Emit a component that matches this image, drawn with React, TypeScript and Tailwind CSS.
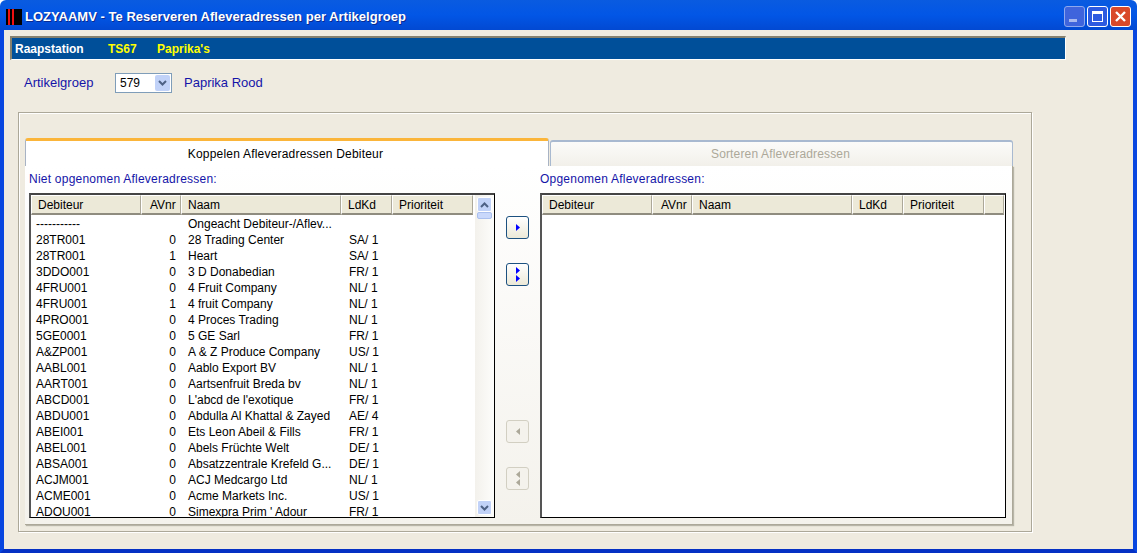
import { useState } from 'react';

const rows = [
  ['-----------', '', 'Ongeacht Debiteur-/Aflev...', ''],
  ['28TR001', '0', '28 Trading Center', 'SA/ 1'],
  ['28TR001', '1', 'Heart', 'SA/ 1'],
  ['3DDO001', '0', '3 D Donabedian', 'FR/ 1'],
  ['4FRU001', '0', '4 Fruit Company', 'NL/ 1'],
  ['4FRU001', '1', '4 fruit Company', 'NL/ 1'],
  ['4PRO001', '0', '4 Proces Trading', 'NL/ 1'],
  ['5GE0001', '0', '5 GE Sarl', 'FR/ 1'],
  ['A&ZP001', '0', 'A & Z Produce Company', 'US/ 1'],
  ['AABL001', '0', 'Aablo Export BV', 'NL/ 1'],
  ['AART001', '0', 'Aartsenfruit Breda bv', 'NL/ 1'],
  ['ABCD001', '0', "L'abcd de l'exotique", 'FR/ 1'],
  ['ABDU001', '0', 'Abdulla Al Khattal & Zayed', 'AE/ 4'],
  ['ABEI001', '0', 'Ets Leon Abeil & Fills', 'FR/ 1'],
  ['ABEL001', '0', 'Abels Früchte Welt', 'DE/ 1'],
  ['ABSA001', '0', 'Absatzzentrale Krefeld G...', 'DE/ 1'],
  ['ACJM001', '0', 'ACJ Medcargo Ltd', 'NL/ 1'],
  ['ACME001', '0', 'Acme Markets Inc.', 'US/ 1'],
  ['ADOU001', '0', "Simexpra Prim ' Adour", 'FR/ 1'],
];

function HeaderCell({ label, width }: { label: string; width: string }) {
  return (
    <div
      className={`${width} h-[20px] shrink-0 flex items-center px-[6px] bg-[#ece9d8] border-t border-l border-white border-b-2 border-b-[#8f8c7f] border-r border-r-[#aca899]`}
    >
      {label}
    </div>
  );
}

function Header({ last }: { last?: boolean }) {
  return (
    <div className="flex h-[20px] shrink-0">
      <HeaderCell label="Debiteur" width="w-[110px]" />
      <HeaderCell label="AVnr" width="w-[40px] pl-[8px]" />
      <HeaderCell label="Naam" width="w-[160px]" />
      <HeaderCell label="LdKd" width="w-[51px]" />
      <HeaderCell label="Prioriteit" width="w-[81px]" />
      {last && <HeaderCell label="" width="w-[20px]" />}
    </div>
  );
}

function Scrollbar() {
  return (
    <div className="w-[19px] shrink-0 flex flex-col items-center bg-gradient-to-r from-[#f3f1ec] to-[#fdfdfb] ml-[2px]">
      <div className="w-[15px] h-[15px] mt-[2px] rounded-[2px] bg-[#c1d2f8] border border-white flex items-center justify-center">
        <svg width="9" height="6" viewBox="0 0 9 6"><path d="M1 5l3.5-3.5L8 5" fill="none" stroke="#4d6185" strokeWidth="2" /></svg>
      </div>
      <div className="w-[15px] h-[7px] rounded-[2px] bg-[#c9d8fb] border border-[#a9bfee]" />
      <div className="flex-1" />
      <div className="w-[15px] h-[15px] mb-[2px] rounded-[2px] bg-[#c1d2f8] border border-white flex items-center justify-center">
        <svg width="9" height="6" viewBox="0 0 9 6"><path d="M1 1l3.5 3.5L8 1" fill="none" stroke="#4d6185" strokeWidth="2" /></svg>
      </div>
    </div>
  );
}

function ArrowButton({ dir, count, disabled }: { dir: 'l' | 'r'; count: 1 | 2; disabled?: boolean }) {
  const color = disabled ? '#aca899' : '#0000ff';
  const d = dir === 'r' ? 'M0 0l4 3.5L0 7z' : 'M4 0L0 3.5 4 7z';
  return (
    <div
      className={`w-[23px] h-[23px] rounded-[3px] border flex flex-col gap-[1px] items-center justify-center ${disabled ? 'border-[#d2cfc2] bg-[#f4f2ec]' : 'border-[#1c5180] bg-gradient-to-b from-white to-[#ece9d8]'}`}
    >
      {Array.from({ length: count }).map((_, i) => (
        <svg key={i} width="4" height="7" viewBox="0 0 4 7"><path d={d} fill={color} /></svg>
      ))}
    </div>
  );
}

export default function App() {
  const [group] = useState('579');

  return (
    <div className="w-[1137px] h-[553px] flex flex-col overflow-hidden text-[12px] text-black font-['Liberation_Sans',Arial,sans-serif]">
      {/* title bar */}
      <div className="h-[30px] shrink-0 flex items-center pt-[3px] pl-[6px] pr-[6px] rounded-t-[6px] bg-gradient-to-b from-[#0a5be0] via-[#0256e6] to-[#0249d2]">
        <div className="w-[16px] h-[16px] bg-black flex gap-[2px] pl-[2px]">
          <span className="w-[2px] bg-[#f01010]" />
          <span className="w-[2px] bg-[#f01010]" />
        </div>
        <span className="ml-[3px] mt-[1px] text-white font-bold text-[13px] tracking-[0.02px] [text-shadow:1px_1px_0_#0a2a90]">
          LOZYAAMV - Te Reserveren Afleveradressen per Artikelgroep
        </span>
        <div className="ml-auto flex gap-[2px]">
          <div className="w-[21px] h-[21px] rounded-[3px] border border-[#8ea8ee] bg-[#3f64dc] flex items-end pl-[4px] pb-[4px]">
            <span className="w-[8px] h-[3px] bg-[#a9b9ee]" />
          </div>
          <div className="w-[21px] h-[21px] rounded-[3px] border border-white bg-[#2d5ae0] flex items-center justify-center">
            <span className="w-[11px] h-[11px] border border-white border-t-[3px]" />
          </div>
          <div className="w-[21px] h-[21px] rounded-[3px] border border-white bg-[#d9492a] flex items-center justify-center">
            <svg width="13" height="13" viewBox="0 0 13 13"><path d="M2 2l9 9M11 2l-9 9" stroke="white" strokeWidth="2.4" /></svg>
          </div>
        </div>
      </div>

      {/* window body */}
      <div className="flex-1 flex flex-col border-x-4 border-x-[#0846e0] border-b-4 border-b-[#0531c4] bg-[#efebe0] pt-[6px] pl-[6px]">
        <div className="w-[1056px] h-[24px] shrink-0 flex items-center bg-[#004f99] border-t-2 border-l-2 border-t-[#85816f] border-l-[#85816f] border-b border-r border-b-white border-r-white pl-[3px] font-bold text-white">
          <span className="w-[93px]">Raapstation</span>
          <span className="w-[49px] text-[#ffff00]">TS67</span>
          <span className="text-[#ffff00]">Paprika's</span>
        </div>

        <div className="flex items-center mt-[13px] ml-[14px] h-[20px] text-[13px] text-[#1414a8]">
          <span className="w-[91px]">Artikelgroep</span>
          <div className="w-[57px] h-[20px] bg-white border border-[#7f9db9] flex items-center justify-between pl-[4px] pr-[1px] text-[12px] text-black">
            {group}
            <span className="w-[15px] h-[16px] rounded-[2px] bg-[#c1d2f8] flex items-center justify-center">
              <svg width="9" height="6" viewBox="0 0 9 6"><path d="M1 1l3.5 3.5L8 1" fill="none" stroke="#4d6185" strokeWidth="2" /></svg>
            </span>
          </div>
          <span className="ml-[12px]">Paprika Rood</span>
        </div>

        {/* group frame */}
        <div className="ml-[8px] mt-[19px] w-[1014px] h-[420px] border border-[#aca899] shadow-[inset_1px_1px_0_white,1px_1px_0_white] pl-[6px] pt-[25px]">
          {/* tabs */}
          <div className="flex items-end h-[28px] w-[988px]">
            <div className="w-[524px] h-[28px] flex items-center justify-center pr-[3px] bg-white rounded-t-[3px] border-t-[3px] border-t-[#fbb53a] border-x border-x-[#a8b3c4] tracking-[0.2px]">
              Koppelen Afleveradressen Debiteur
            </div>
            <div className="ml-[1px] w-[463px] h-[26px] flex items-center justify-center pr-[2px] rounded-t-[3px] border-t-2 border-x border-t-[#a8b9d0] border-x-[#a8b9d0] bg-gradient-to-b from-[#fbfbf9] to-[#f2f0ea] text-[#aca899] tracking-[0.15px]">
              Sorteren Afleveradressen
            </div>
          </div>

          {/* tab page */}
          <div className="w-[988px] h-[359px] bg-gradient-to-b from-white to-[#f4f2ec] border-r border-b border-r-[#aca899] border-b-[#aca899] shadow-[1px_1px_1px_#b8b5a8] pl-[4px] pt-[4px]">
            <div className="flex text-[#1414a8] tracking-[0.23px]">
              <div className="w-[466px] h-[23px]">Niet opgenomen Afleveradressen:</div>
              <div className="ml-[45px] h-[23px]">Opgenomen Afleveradressen:</div>
            </div>

            <div className="flex">
              <div className="w-[466px] h-[325px] flex border border-black border-l-2 border-t-2 border-l-[#555] border-t-[#444] bg-white overflow-hidden">
                <div className="flex-1 flex flex-col min-w-0 overflow-hidden">
                  <Header />
                  <div className="mt-[1px]">
                    {rows.map((r, i) => (
                      <div key={i} className="flex h-[16px] items-center leading-none">
                        <span className="w-[85px] pl-[5px] shrink-0">{r[0]}</span>
                        <span className="w-[60px] text-right shrink-0">{r[1]}</span>
                        <span className="w-[160px] pl-[12px] shrink-0 whitespace-nowrap">{r[2]}</span>
                        <span className="w-[51px] pl-[13px] shrink-0 whitespace-nowrap">{r[3]}</span>
                      </div>
                    ))}
                  </div>
                </div>
                <Scrollbar />
              </div>

              <div className="w-[45px] h-[325px] shrink-0 flex flex-col items-center pt-[23px]">
                <ArrowButton dir="r" count={1} />
                <div className="mt-[24px]"><ArrowButton dir="r" count={2} /></div>
                <div className="mt-[134px]"><ArrowButton dir="l" count={1} disabled /></div>
                <div className="mt-[24px]"><ArrowButton dir="l" count={2} disabled /></div>
              </div>

              <div className="w-[466px] h-[325px] flex flex-col border border-black border-l-2 border-t-2 border-l-[#555] border-t-[#444] bg-white overflow-hidden">
                <Header last />
              </div>
            </div>
          </div>
        </div>
      </div>
    </div>
  );
}
